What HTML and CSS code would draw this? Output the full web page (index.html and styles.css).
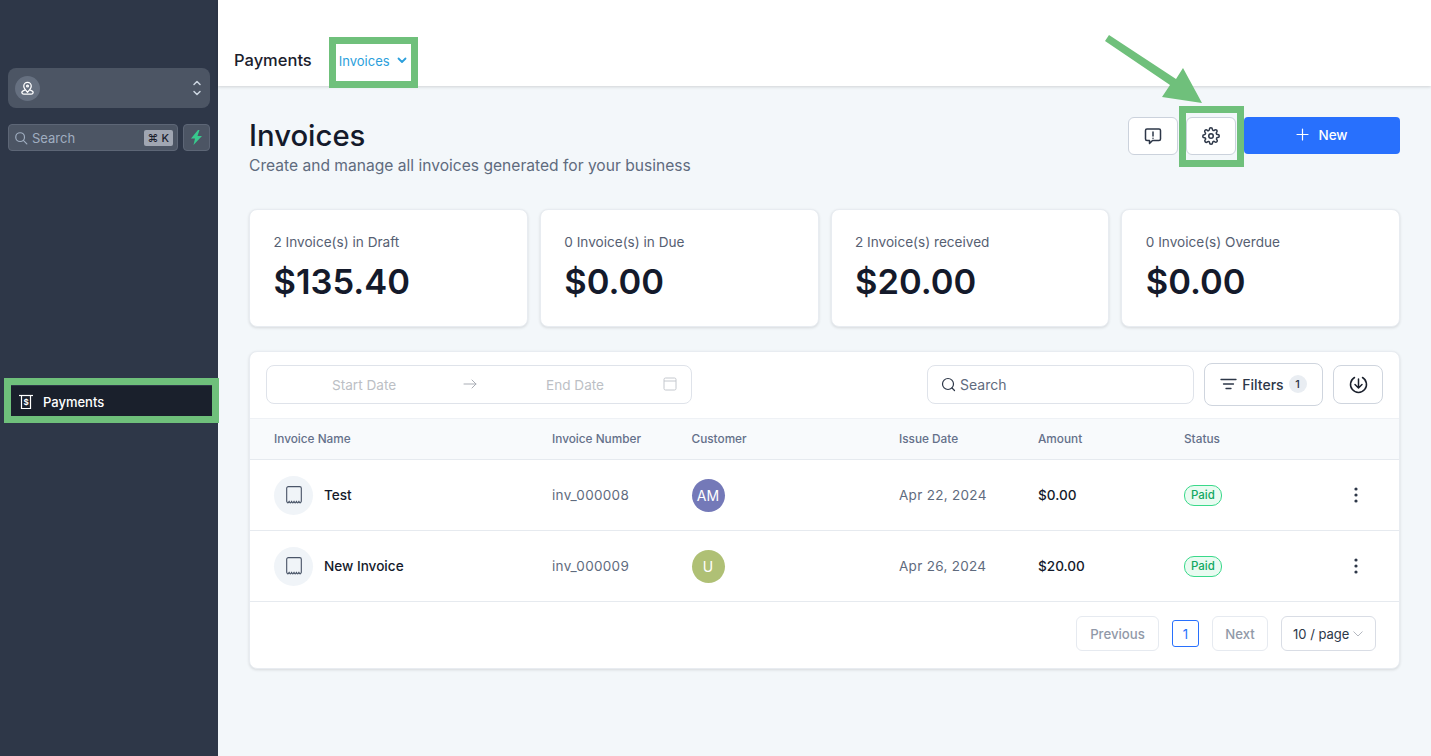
FILE: index.html
```html
<!DOCTYPE html>
<html lang="en">
<head>
    <meta charset="UTF-8">
    <title>Invoices</title>
    <link rel="stylesheet" href="styles.css">
</head>
<body>
    <div class="sidebar">
        <div class="switcher">
            <span class="switcher-logo">
                <svg width="15" height="15" viewBox="0 0 24 24" fill="none" stroke="#fff" stroke-width="2" stroke-linecap="round" stroke-linejoin="round"><path d="M12 18c-3-3-6-6-6-10a6 6 0 0 1 12 0c0 4-3 7-6 10z"/><circle cx="12" cy="8" r="1.500"/><path d="M7.500 14.500c-3 1-5 2.500-4.500 4.500 .3 1.200 1.500 2 3 2h12c1.500 0 2.700-.8 3-2 .5-2-1.500-3.500-4.500-4.500"/></svg>
            </span>
            <svg class="switcher-arrows" width="10" height="18" viewBox="0 0 10 18" fill="none" stroke="#cbd5e0" stroke-width="1.500" stroke-linecap="round" stroke-linejoin="round"><path d="M2 5.500L5 2.500l3 3"/><path d="M2 12.500l3 3 3-3"/></svg>
        </div>
        <div class="side-search-row">
            <div class="side-search">
                <svg width="14" height="14" viewBox="0 0 24 24" fill="none" stroke="#a0aec0" stroke-width="2" stroke-linecap="round"><circle cx="10.500" cy="10.500" r="7.500"/><path d="M16 16l6 6"/></svg>
                <span class="side-search-text">Search</span>
                <span class="shortcut">⌘ K</span>
            </div>
            <div class="bolt-btn">
                <svg width="11" height="15" viewBox="0 0 11 15"><path d="M7 0L0 8.500h4L2.500 15 11 6H6.500L8.500 0z" fill="#38c98d"/></svg>
            </div>
        </div>
        <div class="side-item">
            <svg width="16" height="16" viewBox="0 0 16 16" fill="none" stroke="#fff" stroke-width="1.200"><path d="M1 1.500h14"/><path d="M3.500 1.500v13h9v-13"/><text x="8" y="11" font-size="8" font-weight="700" fill="#fff" stroke="none" text-anchor="middle" font-family="Inter, sans-serif">$</text></svg>
            <span>Payments</span>
        </div>
    </div>

    <div class="main">
        <div class="topbar">
            <span class="topbar-title">Payments</span>
            <span class="topbar-tab">Invoices
                <svg width="10" height="7" viewBox="0 0 10 7" fill="none" stroke="#2b9fdc" stroke-width="1.800" stroke-linecap="round" stroke-linejoin="round"><path d="M1.500 1.500L5 5l3.500-3.500"/></svg>
            </span>
        </div>

        <div class="content">
            <div class="page-head">
                <div class="page-titles">
                    <h1>Invoices</h1>
                    <p>Create and manage all invoices generated for your business</p>
                </div>
                <div class="page-actions">
                    <button class="icon-btn">
                        <svg width="18" height="18" viewBox="0 0 18 18" fill="none" stroke="#2d3748" stroke-width="1.500" stroke-linejoin="round" stroke-linecap="round"><path d="M3 2h12a1.500 1.500 0 0 1 1.500 1.500v8.500a1.500 1.500 0 0 1-1.500 1.500H8.500L5.500 16.500v-3H3A1.500 1.500 0 0 1 1.500 12V3.500A1.500 1.500 0 0 1 3 2z"/><path d="M9 5v4"/><path d="M9 11.200v.1"/></svg>
                    </button>
                    <button class="icon-btn">
                        <svg width="18" height="18" viewBox="0 0 24 24" fill="none" stroke="#2d3748" stroke-width="2" stroke-linejoin="round" stroke-linecap="round"><circle cx="12" cy="12" r="3"/><path d="M19.400 15a1.650 1.650 0 0 0 .33 1.820l.06.06a2 2 0 1 1-2.830 2.830l-.06-.06a1.650 1.650 0 0 0-2.800 1.170V21a2 2 0 1 1-4 0v-.09a1.650 1.650 0 0 0-2.880-1.110l-.06.06a2 2 0 1 1-2.830-2.830l.06-.06a1.650 1.650 0 0 0-1.170-2.800H3a2 2 0 1 1 0-4h.09a1.650 1.650 0 0 0 1.110-2.880l-.06-.06a2 2 0 1 1 2.830-2.830l.06.06a1.650 1.650 0 0 0 2.800-1.170V3a2 2 0 1 1 4 0v.09a1.650 1.650 0 0 0 2.800 1.170l.06-.06a2 2 0 1 1 2.830 2.830l-.06.06a1.650 1.650 0 0 0 1.170 2.800H21a2 2 0 1 1 0 4h-.09a1.650 1.650 0 0 0-1.510 1.110z"/></svg>
                    </button>
                    <button class="new-btn">
                        <svg width="13" height="13" viewBox="0 0 13 13" fill="none" stroke="#fff" stroke-width="1.200" stroke-linecap="round"><path d="M6.500 1v11M1 6.500h11"/></svg>
                        New
                    </button>
                </div>
            </div>

            <div class="stats">
                <div class="stat">
                    <div class="stat-label">2 Invoice(s) in Draft</div>
                    <div class="stat-value">$135.40</div>
                </div>
                <div class="stat">
                    <div class="stat-label">0 Invoice(s) in Due</div>
                    <div class="stat-value">$0.00</div>
                </div>
                <div class="stat">
                    <div class="stat-label">2 Invoice(s) received</div>
                    <div class="stat-value">$20.00</div>
                </div>
                <div class="stat">
                    <div class="stat-label">0 Invoice(s) Overdue</div>
                    <div class="stat-value">$0.00</div>
                </div>
            </div>

            <div class="table-card">
                <div class="toolbar">
                    <div class="date-range">
                        <span class="date-start">Start Date</span>
                        <svg width="14" height="10" viewBox="0 0 14 10" fill="none" stroke="#a9adb5" stroke-width="1" stroke-linecap="round" stroke-linejoin="round"><path d="M1 5h12M9 1l4 4-4 4"/></svg>
                        <span class="date-end">End Date</span>
                        <svg class="date-cal" width="14" height="14" viewBox="0 0 14 14" fill="none" stroke="#c4c8ce" stroke-width="1"><rect x="1" y="1" width="12" height="12" rx="1.500"/><path d="M1 4h12"/></svg>
                    </div>
                    <div class="table-search">
                        <svg width="15" height="15" viewBox="0 0 15 15" fill="none" stroke="#2d3748" stroke-width="1.200" stroke-linecap="round"><circle cx="7" cy="7" r="5.500"/><path d="M11 11l2.500 2.500"/></svg>
                        Search
                    </div>
                    <button class="filter-btn">
                        <svg width="17" height="12" viewBox="0 0 17 12" fill="none" stroke="#2d3748" stroke-width="1.300" stroke-linecap="round"><path d="M1 1.500h15M3.500 6h10M6 10.500h5"/></svg>
                        Filters
                        <span class="filter-count">1</span>
                    </button>
                    <button class="download-btn">
                        <svg width="19" height="19" viewBox="0 0 19 19" fill="none" stroke="#1a202c" stroke-width="1.500" stroke-linecap="round" stroke-linejoin="round"><path d="M5.500 2.500a8 8 0 1 0 8 0"/><path d="M9.500 4v8.500M6 9.500l3.500 3.500L13 9.500"/></svg>
                    </button>
                </div>

                <div class="row row-head">
                    <span>Invoice Name</span>
                    <span>Invoice Number</span>
                    <span>Customer</span>
                    <span>Issue Date</span>
                    <span>Amount</span>
                    <span>Status</span>
                </div>

                <div class="row">
                    <div class="inv-name">
                        <span class="inv-icon">
                            <svg width="16" height="18" viewBox="0 0 14 16" fill="none" stroke="#4a5568" stroke-width="1" stroke-linejoin="round"><path d="M.5 13.500V2A1.500 1.500 0 0 1 2 .5h10A1.500 1.500 0 0 1 13.500 2v11.500q-1.083 3-2.167 0q-1.083 3-2.167 0q-1.083 3-2.167 0q-1.083 3-2.167 0q-1.083 3-2.167 0q-1.083 3-2.165 0z"/></svg>
                        </span>
                        Test
                    </div>
                    <span class="cell-muted">inv_000008</span>
                    <span><span class="avatar avatar-am">AM</span></span>
                    <span class="cell-muted">Apr 22, 2024</span>
                    <span class="cell-amount">$0.00</span>
                    <span><span class="badge">Paid</span></span>
                    <svg class="row-menu" width="4" height="16" viewBox="0 0 4 16" fill="#2d3748"><circle cx="2" cy="2" r="1.600"/><circle cx="2" cy="8" r="1.600"/><circle cx="2" cy="14" r="1.600"/></svg>
                </div>

                <div class="row">
                    <div class="inv-name">
                        <span class="inv-icon">
                            <svg width="16" height="18" viewBox="0 0 14 16" fill="none" stroke="#4a5568" stroke-width="1" stroke-linejoin="round"><path d="M.5 13.500V2A1.500 1.500 0 0 1 2 .5h10A1.500 1.500 0 0 1 13.500 2v11.500q-1.083 3-2.167 0q-1.083 3-2.167 0q-1.083 3-2.167 0q-1.083 3-2.167 0q-1.083 3-2.167 0q-1.083 3-2.165 0z"/></svg>
                        </span>
                        New Invoice
                    </div>
                    <span class="cell-muted">inv_000009</span>
                    <span><span class="avatar avatar-u">U</span></span>
                    <span class="cell-muted">Apr 26, 2024</span>
                    <span class="cell-amount">$20.00</span>
                    <span><span class="badge">Paid</span></span>
                    <svg class="row-menu" width="4" height="16" viewBox="0 0 4 16" fill="#2d3748"><circle cx="2" cy="2" r="1.600"/><circle cx="2" cy="8" r="1.600"/><circle cx="2" cy="14" r="1.600"/></svg>
                </div>

                <div class="pager">
                    <button class="page-btn page-prev">Previous</button>
                    <span class="page-num">1</span>
                    <button class="page-btn page-next">Next</button>
                    <div class="page-size">
                        10 / page
                        <svg width="10" height="6" viewBox="0 0 10 6" fill="none" stroke="#b4b8c0" stroke-width="1"><path d="M.5.500L5 5 9.500.500"/></svg>
                    </div>
                </div>
            </div>
        </div>
    </div>

    <!-- green annotations on top of the screenshot -->
    <div class="mark mark-tab"></div>
    <div class="mark mark-gear"></div>
    <div class="mark mark-side"></div>
    <svg class="mark-arrow" width="110" height="75" viewBox="0 0 110 75" fill="#6fc07b"><path d="M0 6L4 0 71 44 78 33 97 68 57 62 65 50z"/></svg>
</body>
</html>
```

FILE: styles.css
```css
* {
    box-sizing: border-box;
}

body {
    margin: 0;
    height: 756px;
    overflow: hidden;
    display: flex;
    background-color: #f3f7fa;
    color: #141a2b;
    font-family: 'Inter', sans-serif;
}

button {
    font-family: inherit;
    cursor: pointer;
}

/* Sidebar */
.sidebar {
    width: 218px;
    flex-shrink: 0;
    background-color: #2e3748;
    padding: 68px 8px 0;
}

.switcher {
    height: 40px;
    background-color: #4c5564;
    border-radius: 8px;
    display: flex;
    align-items: center;
    justify-content: space-between;
    padding: 0 8px 0 7px;
}

.switcher-logo {
    width: 25px;
    height: 25px;
    border-radius: 50%;
    background-color: #667080;
    display: flex;
    align-items: center;
    justify-content: center;
}

.side-search-row {
    display: flex;
    gap: 5px;
    margin-top: 16px;
}

.side-search {
    flex: 1;
    height: 27px;
    background-color: #4c5564;
    border: 1px solid #5d6676;
    border-radius: 4px;
    display: flex;
    align-items: center;
    padding: 0 4px 0 5px;
    font-size: 13px;
    color: #a0aec0;
}

.side-search-text {
    flex: 1;
    margin-left: 4px;
}

.shortcut {
    background-color: #a0a6b2;
    color: #1a202c;
    font-size: 11px;
    font-weight: 500;
    border-radius: 2px;
    padding: 1px 4px;
    white-space: nowrap;
}

.bolt-btn {
    width: 27px;
    height: 27px;
    background-color: #4c5564;
    border: 1px solid #5d6676;
    border-radius: 4px;
    display: flex;
    align-items: center;
    justify-content: center;
}

.side-item {
    height: 31px;
    margin: 235px -2px 0 3px;
    padding-left: 7px;
    background-color: #1a202c;
    color: #fff;
    font-size: 13px;
    font-weight: 500;
    display: flex;
    align-items: center;
    gap: 9px;
}

/* Main area */
.main {
    flex: 1;
    min-width: 0;
}

.topbar {
    height: 86px;
    background-color: #fff;
    box-shadow: 0 1px 3px rgba(0, 0, 0, 0.15);
    display: flex;
    align-items: center;
    padding: 33px 0 0 16px;
}

.topbar-title {
    font-size: 16.500px;
    font-weight: 500;
    color: #1a202c;
}

.topbar-tab {
    margin-left: 27px;
    font-size: 13px;
    font-weight: 400;
    color: #2b9fdc;
    display: flex;
    align-items: center;
    gap: 7px;
    padding-top: 2px;
}

.content {
    padding: 31px 31px 0;
}

.page-head {
    display: flex;
    justify-content: space-between;
    align-items: flex-start;
}

.page-titles {
    padding-top: 1px;
}

h1 {
    margin: 0;
    font-size: 29.300px;
    line-height: 36px;
    font-weight: 500;
    color: #141a2b;
}

.page-head p {
    margin: 0;
    font-size: 15.600px;
    line-height: 24px;
    color: #5f6b7e;
}

.page-actions {
    display: flex;
    align-items: flex-start;
    gap: 8px;
}

.icon-btn {
    width: 50px;
    height: 38px;
    background-color: #fff;
    border: 1px solid #cbd2dc;
    border-radius: 6px;
    display: flex;
    align-items: center;
    justify-content: center;
    padding: 0;
}

.new-btn {
    width: 156px;
    height: 37px;
    background-color: #2870fd;
    color: #fff;
    border: none;
    border-radius: 4px;
    font-size: 13.500px;
    font-weight: 500;
    display: flex;
    align-items: center;
    justify-content: center;
    gap: 9px;
    padding: 0 0 2px;
}

.stats {
    display: grid;
    grid-template-columns: repeat(4, 1fr);
    gap: 12px;
    margin-top: 31px;
}

.stat {
    height: 118px;
    background-color: #fff;
    border-radius: 8px;
    border: 1px solid #e8ecf1;
    box-shadow: 0 1px 3px rgba(0, 0, 0, 0.12);
    padding: 23px 23px 23px 23.500px;
}

.stat-label {
    font-size: 13.600px;
    line-height: 18px;
    color: #566072;
}

.stat-value {
    font-size: 34.500px;
    line-height: 44px;
    font-weight: 600;
    color: #141a2b;
    margin-top: 9px;
}

/* Table card */
.table-card {
    margin-top: 24px;
    height: 318px;
    background-color: #fff;
    border-radius: 8px;
    border: 1px solid #e8ecf1;
    box-shadow: 0 1px 3px rgba(0, 0, 0, 0.12);
}

.toolbar {
    height: 66px;
    display: flex;
    align-items: center;
    padding: 0 16px 2px;
}

.date-range {
    width: 426px;
    height: 39px;
    border: 1px solid #dfe3ea;
    border-radius: 8px;
    display: flex;
    align-items: center;
    padding: 0 14px 0 65px;
    font-size: 13.600px;
    color: #bcbfc5;
}

.date-start {
    width: 131px;
    padding-top: 2px;
}

.date-end {
    padding: 2px 0 0 69px;
    white-space: nowrap;
}

.date-cal {
    margin-left: auto;
}

.table-search {
    width: 267px;
    height: 39px;
    margin-left: 235px;
    border: 1px solid #dfe3ea;
    border-radius: 8px;
    display: flex;
    align-items: center;
    gap: 4px;
    padding: 0 13px;
    font-size: 14px;
    color: #5f6b7e;
}

.filter-btn {
    width: 119px;
    height: 43px;
    margin-left: 10px;
    background-color: #fff;
    border: 1px solid #cfd5de;
    border-radius: 8px;
    font-size: 14px;
    font-weight: 500;
    color: #2d3748;
    display: flex;
    align-items: center;
    justify-content: center;
    gap: 5px;
    padding: 0;
}

.filter-count {
    width: 18px;
    height: 18px;
    border-radius: 50%;
    background-color: #e9edf2;
    font-size: 11px;
    display: flex;
    align-items: center;
    justify-content: center;
}

.download-btn {
    width: 50px;
    height: 39px;
    margin-left: 10px;
    background-color: #fff;
    border: 1px solid #cfd5de;
    border-radius: 8px;
    display: flex;
    align-items: center;
    justify-content: center;
    padding: 0;
}

.row {
    height: 71px;
    display: grid;
    grid-template-columns: 278px 139.500px 207.500px 139px 146px 1fr auto;
    align-items: center;
    padding: 0 41px 0 24px;
    border-bottom: 1px solid #e6eaef;
    font-size: 14px;
}

.row-head {
    height: 42px;
    padding-bottom: 1px;
    background-color: #f8fafc;
    border-top: 1px solid #eef1f5;
    font-size: 11.800px;
    font-weight: 500;
    color: #64708a;
}

.inv-name {
    display: flex;
    align-items: center;
    gap: 11px;
    font-size: 13.600px;
    font-weight: 500;
    color: #141a2b;
}

.inv-icon {
    width: 39px;
    height: 39px;
    border-radius: 50%;
    background-color: #f0f4f8;
    display: flex;
    align-items: center;
    justify-content: center;
}

.cell-muted {
    font-size: 13.500px;
    letter-spacing: 0.3px;
    color: #5f6b7e;
}

.cell-amount {
    font-size: 13.600px;
    font-weight: 500;
    color: #141a2b;
}

.avatar {
    width: 33px;
    height: 33px;
    border-radius: 50%;
    color: #fff;
    font-size: 14px;
    display: flex;
    align-items: center;
    justify-content: center;
}

.avatar-am {
    background-color: #7479b8;
}

.avatar-u {
    background-color: #afc075;
}

.badge {
    display: inline-block;
    height: 21px;
    line-height: 19px;
    padding: 0 6px;
    border: 1px solid #39d98a;
    border-radius: 10px;
    background-color: #e9fbf1;
    color: #12a862;
    font-size: 11.500px;
    font-weight: 500;
}

.pager {
    display: flex;
    justify-content: flex-end;
    align-items: center;
    padding: 14px 23px 0 0;
}

.page-btn {
    height: 35px;
    padding: 0;
    background-color: #fff;
    border: 1px solid #e6eaf0;
    border-radius: 6px;
    font-size: 13.200px;
    font-weight: 500;
    color: #9199a8;
}

.page-prev {
    width: 83px;
}

.page-next {
    width: 56px;
}

.page-num {
    width: 27px;
    height: 27px;
    margin: 0 13px;
    border: 1px solid #2870fd;
    border-radius: 3px;
    color: #2870fd;
    font-size: 13px;
    display: flex;
    align-items: center;
    justify-content: center;
}

.page-size {
    width: 95px;
    height: 35px;
    margin-left: 13px;
    border: 1px solid #d9dde5;
    border-radius: 6px;
    font-size: 13px;
    color: #2d3748;
    display: flex;
    align-items: center;
    gap: 4px;
    padding-left: 11px;
    white-space: nowrap;
}

/* Annotations */
.mark {
    position: absolute;
    border: 7px solid #6fc07b;
}

.mark-tab {
    left: 329px;
    top: 37px;
    width: 89px;
    height: 51px;
}

.mark-gear {
    left: 1179px;
    top: 106px;
    width: 65px;
    height: 61px;
}

.mark-side {
    left: 4px;
    top: 378px;
    width: 215px;
    height: 45px;
}

.mark-arrow {
    position: absolute;
    left: 1105px;
    top: 35px;
}
```
